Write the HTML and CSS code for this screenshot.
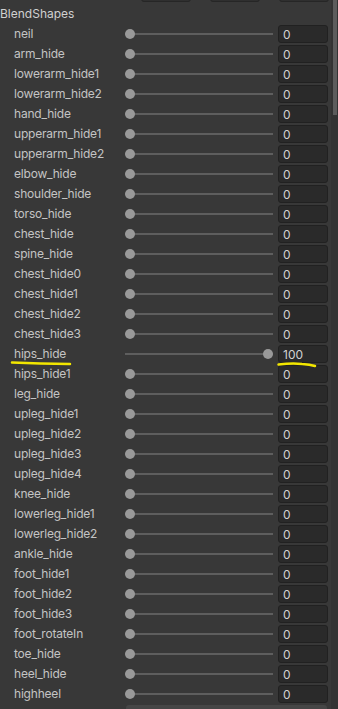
FILE: index.html
```html
<!DOCTYPE html>
<html lang="en">
<head>
    <meta charset="UTF-8">
    <meta name="viewport" content="width=device-width, initial-scale=1.0">
    <title>BlendShapes</title>
    <link rel="stylesheet" href="styles.css">
</head>
<body>
    <div class="window">
        <div class="panel">
            <div class="toolbar">
                <div class="tool-btn"></div>
                <div class="tool-btn"></div>
                <div class="tool-btn"></div>
            </div>

            <div class="section-title">BlendShapes</div>

            <div class="shape-list" id="shape-list"></div>
        </div>

        <div class="scrollbar">
            <div class="scroll-thumb"></div>
        </div>

        <!-- yellow marker strokes drawn over the screenshot -->
        <svg class="marks" width="338" height="709" viewBox="0 0 338 709">
            <path d="M12 362.5 Q40 363.5 70 364" />
            <path d="M278.5 364.5 Q292 363 302 364 Q310 364.5 315 366" />
        </svg>
    </div>

    <script>
        const shapes = [
            ['neil', 0], ['arm_hide', 0], ['lowerarm_hide1', 0], ['lowerarm_hide2', 0],
            ['hand_hide', 0], ['upperarm_hide1', 0], ['upperarm_hide2', 0], ['elbow_hide', 0],
            ['shoulder_hide', 0], ['torso_hide', 0], ['chest_hide', 0], ['spine_hide', 0],
            ['chest_hide0', 0], ['chest_hide1', 0], ['chest_hide2', 0], ['chest_hide3', 0],
            ['hips_hide', 100], ['hips_hide1', 0], ['leg_hide', 0], ['upleg_hide1', 0],
            ['upleg_hide2', 0], ['upleg_hide3', 0], ['upleg_hide4', 0], ['knee_hide', 0],
            ['lowerleg_hide1', 0], ['lowerleg_hide2', 0], ['ankle_hide', 0], ['foot_hide1', 0],
            ['foot_hide2', 0], ['foot_hide3', 0], ['foot_rotateIn', 0], ['toe_hide', 0],
            ['heel_hide', 0], ['highheel', 0]
        ];

        const list = document.getElementById('shape-list');

        shapes.forEach(([name, value]) => {
            const label = document.createElement('div');
            label.className = 'shape-label';
            label.textContent = name;

            // knob travels 138px along the 148px track
            const slider = document.createElement('div');
            slider.className = 'slider';
            slider.innerHTML = '<div class="slider-track"></div>' +
                `<div class="slider-knob" style="left: ${value * 1.38}px"></div>`;

            const field = document.createElement('div');
            field.className = 'value-field';
            field.textContent = value;

            list.append(label, slider, field);
        });

        const more = document.createElement('div');
        more.className = 'next-field';
        list.append(more);
    </script>
</body>
</html>
```

FILE: styles.css
```css
body {
    margin: 0;
    background-color: #383838;
    font-family: Inter, 'Noto Sans', sans-serif;
    font-size: 11px;
    color: #c4c4c4;
    overflow: hidden;
}

.window {
    position: relative;
    display: flex;
    width: 338px;
    height: 709px;
    overflow: hidden;
}

.panel {
    flex: 1;
    min-width: 0;
}

.toolbar {
    display: flex;
    gap: 19px;
    margin-top: -17px;
    padding-left: 141px;
}

.tool-btn {
    width: 48px;
    height: 17px;
    background-color: #2f2f2f;
    border: 1px solid #262626;
    border-radius: 3px;
}

.section-title {
    height: 20px;
    line-height: 20px;
    margin-top: 2px;
    font-size: 12px;
    color: #d0d0d0;
}

.shape-list {
    display: grid;
    grid-template-columns: 106px 148px 50px;
    grid-auto-rows: 20px;
    column-gap: 5px;
    padding-left: 14px;
}

.shape-label {
    line-height: 20px;
    font-size: 12px;
    letter-spacing: -0.2px;
    white-space: nowrap;
}

.slider {
    position: relative;
    height: 20px;
}

.slider-track {
    position: absolute;
    left: 0;
    right: 0;
    top: 9px;
    height: 2px;
    background-color: #5e5e5e;
}

.slider-knob {
    position: absolute;
    top: 5px;
    width: 10px;
    height: 10px;
    border-radius: 50%;
    background-color: #999;
}

.value-field {
    box-sizing: border-box;
    height: 18px;
    margin-top: 1px;
    padding-left: 4px;
    line-height: 17px;
    font-size: 12px;
    background-color: #2a2a2a;
    border: 1px solid #212121;
    border-radius: 3px;
    color: #d2d2d2;
}

.next-field {
    grid-column: 2 / 4;
    height: 20px;
    margin-top: 1px;
    margin-left: 1px;
    margin-right: 1px;
    background-color: #464646;
    border-radius: 3px;
}

.scrollbar {
    width: 7px;
    background-color: #333;
    padding-left: 2px;
    box-sizing: border-box;
}

.scroll-thumb {
    width: 4px;
    height: 115px;
    background-color: #5c5c5c;
}

.marks {
    position: absolute;
    left: 0;
    top: 0;
    pointer-events: none;
}

.marks path {
    fill: none;
    stroke: #f2e600;
    stroke-width: 2.5;
    stroke-linecap: round;
}
```
